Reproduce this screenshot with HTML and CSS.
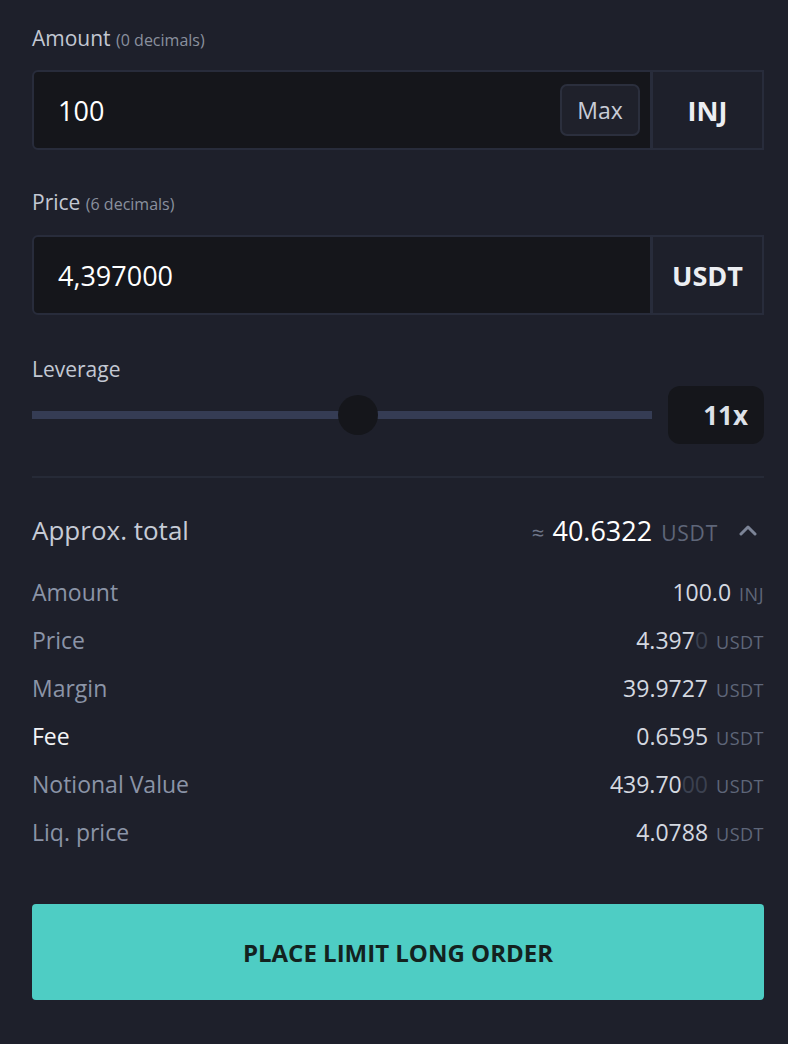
FILE: index.html
```html
<!DOCTYPE html>
<html>
<head>
<meta charset="utf-8">
<link rel="stylesheet" href="styles.css">
</head>
<body>
<div class="panel">
  <div class="label label-first">Amount <span class="sub">(0 decimals)</span></div>
  <div class="field">
    <div class="input">
      <span class="value">100</span>
      <span class="max">Max</span>
    </div>
    <div class="unit-cell">INJ</div>
  </div>

  <div class="label label-next">Price <span class="sub">(6 decimals)</span></div>
  <div class="field">
    <div class="input">
      <span class="value">4,397000</span>
    </div>
    <div class="unit-cell">USDT</div>
  </div>

  <div class="label label-lev">Leverage</div>
  <div class="slider-row">
    <div class="track"><div class="thumb" style="left: 52.5%"></div></div>
    <div class="lev-box">11x</div>
  </div>

  <div class="divider"></div>

  <div class="total-row">
    <span class="total-label">Approx. total</span>
    <span class="total-right">
      <span class="approx">≈</span>
      <span class="total-val">40.6322</span>
      <span class="total-unit">USDT</span>
      <svg class="chev" width="20" height="12" viewBox="0 0 20 12"><path d="M3 10 L10 3 L17 10" fill="none" stroke="#7c8497" stroke-width="3" stroke-linecap="round" stroke-linejoin="round"/></svg>
    </span>
  </div>

  <div class="rows">
    <div class="row"><span class="k">Amount</span><span class="v">100.0<span class="u u-inj">INJ</span></span></div>
    <div class="row"><span class="k">Price</span><span class="v">4.397<span class="fade">0</span><span class="u">USDT</span></span></div>
    <div class="row"><span class="k">Margin</span><span class="v">39.9727<span class="u">USDT</span></span></div>
    <div class="row"><span class="k k-white">Fee</span><span class="v">0.6595<span class="u">USDT</span></span></div>
    <div class="row"><span class="k">Notional Value</span><span class="v">439.70<span class="fade">00</span><span class="u">USDT</span></span></div>
    <div class="row"><span class="k">Liq. price</span><span class="v">4.0788<span class="u">USDT</span></span></div>
  </div>

  <button class="cta">PLACE LIMIT LONG ORDER</button>
</div>
</body>
</html>
```
FILE: styles.css
```css
html, body {
  margin: 0;
  padding: 0;
  background: #1e202b;
}
body {
  font-family: "Open Sans", "Noto Sans", sans-serif;
  color: #c6cbd6;
}
.panel {
  padding: 0 24px 0 32px;
}
.label {
  font-size: 21px;
  line-height: 28px;
  color: #c3c8d3;
}
.label-first { padding-top: 24px; margin-bottom: 16px; }
.label-next { margin-top: 38px; margin-bottom: 17px; }
.label-lev { margin-top: 40px; margin-bottom: 3px; }
.sub {
  font-size: 16px;
  color: #8a909e;
}
.field {
  display: flex;
  height: 80px;
}
.input {
  flex: 1;
  display: flex;
  align-items: center;
  justify-content: space-between;
  background: #15161b;
  border: 2px solid #282c3b;
  border-right-width: 3px;
  border-radius: 6px 0 0 6px;
  padding: 0 10px 0 24px;
}
.value {
  font-size: 27px;
  color: #ffffff;
}
.max {
  font-size: 23px;
  color: #c8ccd6;
  background: #1f212b;
  border: 2px solid #2b2f3d;
  border-radius: 7px;
  width: 80px;
  height: 52px;
  display: flex;
  align-items: center;
  justify-content: center;
  box-sizing: border-box;
}
.unit-cell {
  width: 109px;
  display: flex;
  align-items: center;
  justify-content: center;
  border: 2px solid #282c3b;
  border-left: none;
  font-size: 27px;
  font-weight: 700;
  color: #eceef2;
}
.slider-row {
  display: flex;
  align-items: center;
  gap: 16px;
  height: 58px;
}
.track {
  flex: 1;
  height: 8px;
  background: #353c54;
  position: relative;
}
.thumb {
  position: absolute;
  top: 50%;
  width: 40px;
  height: 40px;
  border-radius: 50%;
  background: #15161b;
  transform: translate(-50%, -50%);
}
.lev-box {
  width: 96px;
  height: 58px;
  box-sizing: border-box;
  background: #15161b;
  border-radius: 12px;
  display: flex;
  align-items: center;
  justify-content: flex-end;
  padding-right: 16px;
  font-size: 26px;
  font-weight: 700;
  color: #dde1e8;
}
.divider {
  height: 2px;
  background: #262a37;
  margin-top: 32px;
}
.total-row {
  display: flex;
  align-items: center;
  justify-content: space-between;
  height: 48px;
  margin-top: 28px;
}
.total-label {
  font-size: 26px;
  color: #c6cbd6;
}
.total-right {
  display: flex;
  align-items: baseline;
}
.approx {
  font-size: 22px;
  color: #6e7689;
  margin-right: 8px;
}
.total-val {
  font-size: 27px;
  color: #ffffff;
}
.total-unit {
  font-size: 21px;
  letter-spacing: 0.8px;
  color: #5e6679;
  margin-left: 9px;
}
.chev {
  margin-left: 20px;
  margin-right: 6px;
  align-self: center;
}
.rows {
  margin-top: 14px;
}
.row {
  display: flex;
  align-items: center;
  justify-content: space-between;
  height: 48px;
}
.k {
  font-size: 23px;
  color: #8b94a7;
}
.k-white { color: #f3f4f7; }
.v {
  font-size: 23px;
  color: #d4d8e0;
  display: flex;
  align-items: baseline;
}
.fade { color: #3b4150; }
.u {
  font-size: 18px;
  letter-spacing: 0.5px;
  color: #5e6679;
  margin-left: 8px;
}
.cta {
  display: block;
  width: 100%;
  height: 96px;
  margin-top: 48px;
  border: none;
  border-radius: 4px;
  background: #4ecdc4;
  font-family: inherit;
  font-size: 24px;
  font-weight: 700;
  color: #13221f;
}
```
